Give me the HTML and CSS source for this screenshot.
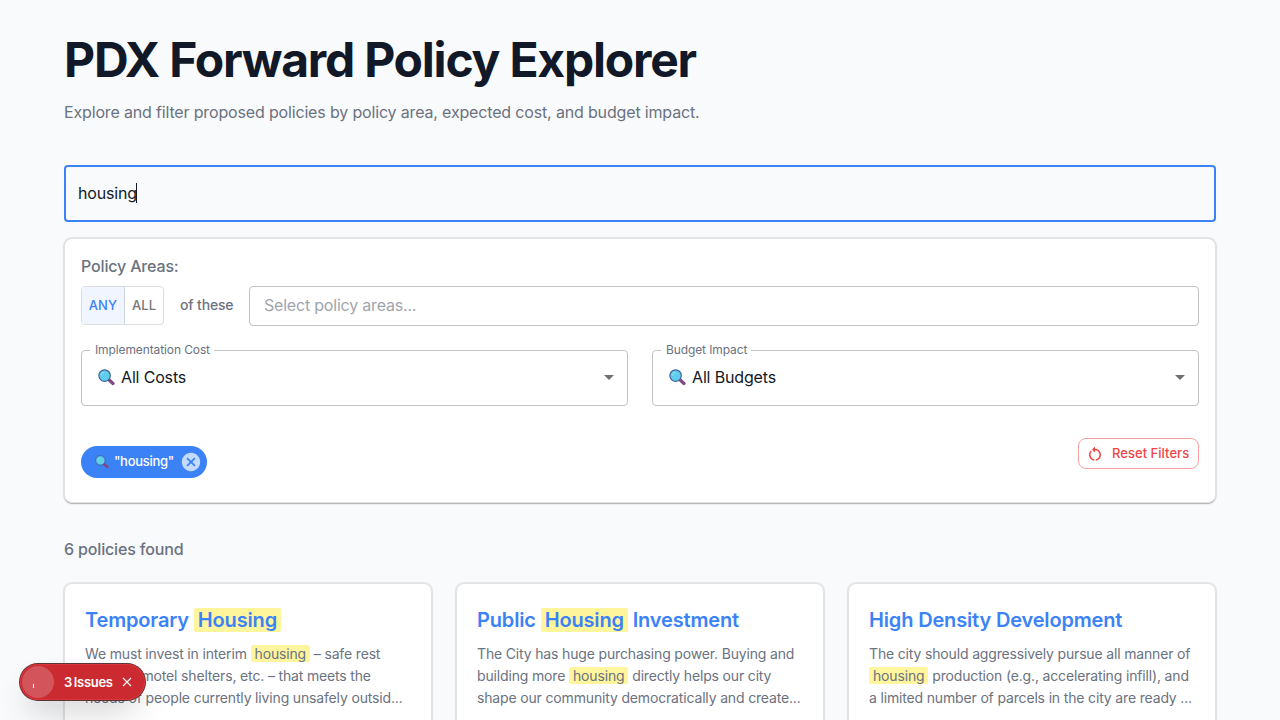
FILE: index.html
```html
<!DOCTYPE html>
<html lang="en">
<head>
<meta charset="utf-8">
<title>PDX Forward Policy Explorer</title>
<link rel="stylesheet" href="styles.css">
</head>
<body>
<svg class="defs" width="0" height="0" aria-hidden="true">
  <symbol id="lens" viewBox="0 0 16 16">
    <path d="M10.3 10.2L14.1 13.6" stroke="#824a85" stroke-width="3.1" stroke-linecap="round"/>
    <circle cx="6.2" cy="6.2" r="5.4" fill="#61cdec" stroke="#42649a" stroke-width="1.1"/>
    <path d="M3.2 6.1a3 3 0 0 1 2.8-2.9" fill="none" stroke="#83dcf3" stroke-width="1"/>
  </symbol>
</svg>
<main class="container">
  <header class="header">
    <h1 class="title">PDX Forward Policy Explorer</h1>
    <p class="subtitle">Explore and filter proposed policies by policy area, expected cost, and budget impact.</p>
  </header>
  <div class="search"><span>housing</span><i class="caret"></i></div>
  <section class="filters">
    <div class="label">Policy Areas:</div>
    <div class="areas">
      <div class="toggle"><button class="option selected">ANY</button><button class="option">ALL</button></div>
      <span class="of-these">of these</span>
      <div class="area-input">Select policy areas...</div>
    </div>
    <div class="selects">
      <fieldset class="select"><legend>Implementation Cost</legend>
        <div class="value"><svg class="lens"><use href="#lens"/></svg><span>All Costs</span><i class="arrow"></i></div></fieldset>
      <fieldset class="select"><legend>Budget Impact</legend>
        <div class="value"><svg class="lens"><use href="#lens"/></svg><span>All Budgets</span><i class="arrow"></i></div></fieldset>
    </div>
    <div class="active">
      <div class="chip"><svg class="chip-lens"><use href="#lens"/></svg><span>"housing"</span>
        <svg class="chip-close" viewBox="0 0 24 24"><path d="M12 2C6.47 2 2 6.47 2 12s4.47 10 10 10 10-4.47 10-10S17.53 2 12 2zm5 13.59L15.59 17 12 13.41 8.41 17 7 15.59 10.59 12 7 8.41 8.41 7 12 10.59 15.59 7 17 8.41 13.41 12 17 15.59z"/></svg>
      </div>
      <button class="reset"><svg class="reset-icon" viewBox="0 0 24 24"><path d="M12 5V2L8 6l4 4V7c3.31 0 6 2.69 6 6 0 2.97-2.17 5.43-5 5.91v2.02c3.95-.49 7-3.85 7-7.93 0-4.42-3.58-8-8-8zm-6 8c0-1.65.67-3.15 1.76-4.24L6.34 7.34C4.9 8.79 4 10.79 4 13c0 4.08 3.05 7.44 7 7.93v-2.02c-2.83-.48-5-2.94-5-5.91z"/></svg>Reset Filters</button>
    </div>
  </section>
  <p class="count">6 policies found</p>
  <div class="cards">
    <article class="card"><h2>Temporary <mark>Housing</mark></h2>
      <p>We must invest in interim <mark>housing</mark> – safe rest<br>villages, motel shelters, etc. – that meets the<br>needs of people currently living unsafely outsid...</p></article>
    <article class="card"><h2>Public <mark>Housing</mark> Investment</h2>
      <p>The City has huge purchasing power. Buying and<br>building more <mark>housing</mark> directly helps our city<br>shape our community democratically and create...</p></article>
    <article class="card"><h2>High Density Development</h2>
      <p>The city should aggressively pursue all manner of<br><mark>housing</mark> production (e.g., accelerating infill), and<br>a limited number of parcels in the city are ready ...</p></article>
  </div>
</main>
<div class="issues">
  <span class="badge"><i class="tick"></i></span>
  <span class="issues-text">3 Issues</span>
  <svg class="issues-close" viewBox="0 0 10 10"><path d="M1 1l8 8M9 1L1 9"/></svg>
</div>
</body>
</html>
```

FILE: styles.css
```css
* { box-sizing: border-box; }
body { margin: 0; height: 720px; overflow: hidden; background: #f9fafc; color: #111827; font-family: Inter, "Liberation Sans", sans-serif; font-size: 16px; letter-spacing: -.16px; }
h1, h2, p { margin: 0; }
button { font-family: inherit; cursor: pointer; }
.defs { position: absolute; }
.container { height: 720px; overflow: hidden; padding: 31px 64px 0; }
.header { height: 134px; }
.title { font-size: 48px; font-weight: 700; line-height: 57.6px; letter-spacing: -1.22px; }
.subtitle { margin-top: 11px; line-height: 24px; color: #6b7280; }
.search { display: flex; align-items: center; height: 57px; padding: 0 12px 2px; border: 2px solid #3b82f6; border-radius: 4px; }
.caret { width: 1px; height: 20px; margin-left: -1px; background: #111827; }
.filters { height: 265px; margin-top: 16px; padding: 15px 16px; background: #fff; border-radius: 8px; border: 1px solid #e0e2e5; box-shadow: 0 2px 1px -1px rgba(0,0,0,.16), 0 0 1px 1px rgba(0,0,0,.08), 0 1px 2px rgba(0,0,0,.1); }
.label { height: 24px; line-height: 24px; font-weight: 500; color: #6b7280; }
.areas { display: flex; align-items: center; height: 40px; margin-top: 8px; }
.toggle { display: flex; width: 83px; height: 39px; margin-top: -1px; border: 1px solid #dcdde0; border-radius: 4px; overflow: hidden; }
.option { flex: 0 0 43px; padding: 0 0 2px; border: 0; background: none; color: #757575; font-size: 13px; font-weight: 500; letter-spacing: .1px; }
.option:last-child { flex: 1; }
.selected { background: #f0f5ff; color: #3b82f6; border-right: 1px solid #ccd2df; }
.of-these { width: 54px; margin: 0 15px 0 16px; padding-bottom: 3px; font-size: 14px; font-weight: 500; color: #6b7280; white-space: nowrap; }
.area-input { flex: 1; height: 40px; padding-left: 14px; line-height: 36px; border: 1px solid #c4c4c4; border-radius: 4px; color: #a1a5ad; letter-spacing: -.2px; }
.selects { display: grid; grid-template-columns: 1fr 1fr; gap: 24px; margin-top: 18px; }
.select { min-width: 0; height: 62px; margin: 0; padding: 0 13px 0 8px; border: 1px solid #c4c4c4; border-radius: 4px; }
.select legend { height: 12px; padding: 0 4px 0 5px; line-height: 12px; font-size: 12px; letter-spacing: -.11px; color: #6b7280; }
.value { display: flex; align-items: center; height: 42px; padding-left: 8px; }
.lens { width: 17px; height: 17px; margin-right: 6px; }
.arrow { margin-left: auto; border: 5px solid transparent; border-top-color: #707070; border-bottom: 0; }
.active { display: flex; align-items: flex-start; justify-content: space-between; margin-top: 32px; }
.chip { display: flex; align-items: center; width: 126px; height: 32px; margin-top: 8px; padding-left: 14px; border-radius: 16px; background: #3b82f6; color: #fff; font-size: 13px; font-weight: 500; }
.chip span { padding-bottom: 2px; letter-spacing: -.3px; }
.chip-lens { width: 14px; height: 14px; margin-right: 5px; }
.chip-close { width: 22px; height: 22px; margin: 0 5px 0 auto; fill: #c4dafc; }
.reset { display: flex; align-items: center; width: 121px; height: 31px; padding: 0 0 1px 8px; border: 1px solid #f7a1a1; border-radius: 8px; background: none; color: #ef4444; font-size: 13px; font-weight: 500; letter-spacing: .03px; white-space: nowrap; }
.reset-icon { width: 18px; height: 18px; margin: 1px 8px 0 -1px; fill: currentColor; }
.count { margin-top: 34px; line-height: 24px; font-weight: 500; color: #6b7280; }
.cards { display: grid; grid-template-columns: repeat(3, 368px); gap: 24px; margin-top: 22px; }
.card { height: 140px; padding: 20px; border: 1px solid #e0e2e5; border-bottom: 0; border-radius: 8px 8px 0 0; background: #fff; box-shadow: 0 0 1px 1px rgba(0,0,0,.08), 0 1px 2px rgba(0,0,0,.1); }
.card h2 { height: 32px; line-height: 32px; font-size: 20px; font-weight: 600; color: #3b82f6; white-space: nowrap; }
.card p { margin-top: 7px; font-size: 14px; line-height: 22px; color: #6b7280; white-space: nowrap; }
mark { padding: 0 4px; border-radius: 2px; background: #fff59d; color: inherit; }
.issues { position: absolute; left: 20px; top: 664px; display: flex; align-items: center; width: 125px; height: 36px; padding-left: 2px; border-radius: 18px; background: #ca2a30; box-shadow: 0 0 0 1px #5b3438, inset 0 0 0 1px #d9363b, 0 16px 32px -8px rgba(0,0,0,.24); color: #fff; }
.badge { display: flex; flex: none; width: 32px; height: 32px; border-radius: 50%; background: #d4545b; }
.tick { width: 1px; height: 4px; margin: 18px 0 0 11px; background: #fff; }
.issues-text { width: 50px; margin-left: 10px; padding-bottom: 1px; font-size: 13px; font-weight: 600; letter-spacing: -.3px; word-spacing: -1.2px; white-space: nowrap; }
.issues-close { width: 10px; height: 10px; margin-left: 8px; fill: none; stroke: #fff; stroke-width: 1.1; }
```
